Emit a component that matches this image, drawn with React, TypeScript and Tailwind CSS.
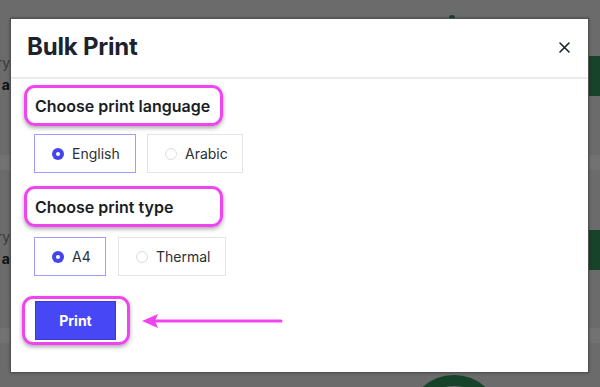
import React from "react";

function Radio({ checked }: { checked: boolean }) {
  return checked ? (
    <span className="w-[12px] h-[12px] rounded-full bg-[#4545f0] flex items-center justify-center shrink-0">
      <span className="w-[4px] h-[4px] rounded-full bg-white" />
    </span>
  ) : (
    <span className="w-[12px] h-[12px] rounded-full border border-[#dcdce2] bg-white shrink-0" />
  );
}

function Option({ label, checked, w }: { label: string; checked: boolean; w: string }) {
  return (
    <div
      className={`${w} h-[39px] flex items-center gap-[8px] pl-[17px] border ${
        checked ? "border-[#9d9dff]" : "border-[#e4e4e8]"
      } text-[14px] text-[#2b2f36]`}
    >
      <Radio checked={checked} />
      <span>{label}</span>
    </div>
  );
}

function Highlight({ children }: { children: React.ReactNode }) {
  return (
    <div className="w-[199px] h-[41px] rounded-[11px] border-[3px] border-[#f044f0] shadow-[0_2px_4px_rgba(0,0,0,0.35)] flex items-center pl-[8px] text-[16px] font-semibold text-[#1a1d23]">
      {children}
    </div>
  );
}

export default function App() {
  return (
    <div
      className="relative w-[600px] h-[387px] overflow-hidden bg-[#6b6b6c]"
      style={{ fontFamily: "Inter, 'Noto Sans', sans-serif" }}
    >
      {/* background page hints */}
      <div className="absolute left-0 top-[155px] w-[600px] h-[15px] bg-[#727273]" />
      <div className="absolute left-0 top-[328px] w-[600px] h-[15px] bg-[#727273]" />
      <div className="absolute left-[-40px] top-[54px] w-[50px] text-right text-[14px] text-[#3a3a3a] leading-[18px]">ry</div>
      <div className="absolute left-[-40px] top-[76px] w-[50px] text-right text-[14px] font-bold text-[#111] leading-[18px]">a</div>
      <div className="absolute left-[-40px] top-[228px] w-[50px] text-right text-[14px] text-[#3a3a3a] leading-[18px]">ry</div>
      <div className="absolute left-[-40px] top-[250px] w-[50px] text-right text-[14px] font-bold text-[#111] leading-[18px]">a</div>
      <div className="absolute left-[589px] top-[56px] w-[11px] h-[40px] bg-[#17432a]" />
      <div className="absolute left-[589px] top-[230px] w-[11px] h-[40px] bg-[#17432a]" />
      <div className="absolute left-[407px] top-[375px] w-[94px] h-[94px] rounded-full border-[11px] border-[#17432a]" />
      <div className="absolute left-[449px] top-[15px] w-[6px] h-[6px] rounded-full bg-[#17432a]" />

      {/* modal */}
      <div className="absolute left-[10px] top-[18px] w-[579px] h-[355px] bg-white border border-[#505050] shadow-[0_0_3px_rgba(0,0,0,0.3)] flex flex-col">
        <div className="h-[60px] flex items-center justify-between pl-[16px] pr-[18px] border-b-2 border-[#ebebed]">
          <h1 className="text-[24px] font-bold text-[#1c222e] tracking-[-0.2px] mt-[-2px]">Bulk Print</h1>
          <svg width="11" height="11" viewBox="0 0 11 11" className="mt-[-2px]">
            <path d="M1 1L10 10M10 1L1 10" stroke="#1c222e" strokeWidth="1.6" strokeLinecap="round" />
          </svg>
        </div>
        <div className="flex flex-col pl-[13px] pt-[6px]">
          <Highlight>Choose print language</Highlight>
          <div className="flex gap-[11px] ml-[10px] mt-[8px]">
            <Option label="English" checked w="w-[102px]" />
            <Option label="Arabic" checked={false} w="w-[96px]" />
          </div>
          <div className="mt-[13px]">
            <Highlight>Choose print type</Highlight>
          </div>
          <div className="flex gap-[12px] ml-[10px] mt-[10px]">
            <Option label="A4" checked w="w-[72px]" />
            <Option label="Thermal" checked={false} w="w-[108px]" />
          </div>
          <div className="flex items-center mt-[20px] ml-[-2px]">
            <div className="w-[108px] h-[49px] rounded-[11px] border-[3px] border-[#f044f0] shadow-[0_2px_4px_rgba(0,0,0,0.35)] flex items-center pl-[10px]">
              <button className="w-[81px] h-[39px] bg-[#4747f6] border border-[#3a3ad0] text-white text-[14px] font-bold">
                Print
              </button>
            </div>
            <svg width="142" height="20" viewBox="0 0 142 20" className="ml-[11px]">
              <path d="M14 10H140" stroke="#f044f0" strokeWidth="3" strokeLinecap="round" />
              <path d="M1 10L17 3L14 10L17 17Z" fill="#f044f0" />
            </svg>
          </div>
        </div>
      </div>
    </div>
  );
}
